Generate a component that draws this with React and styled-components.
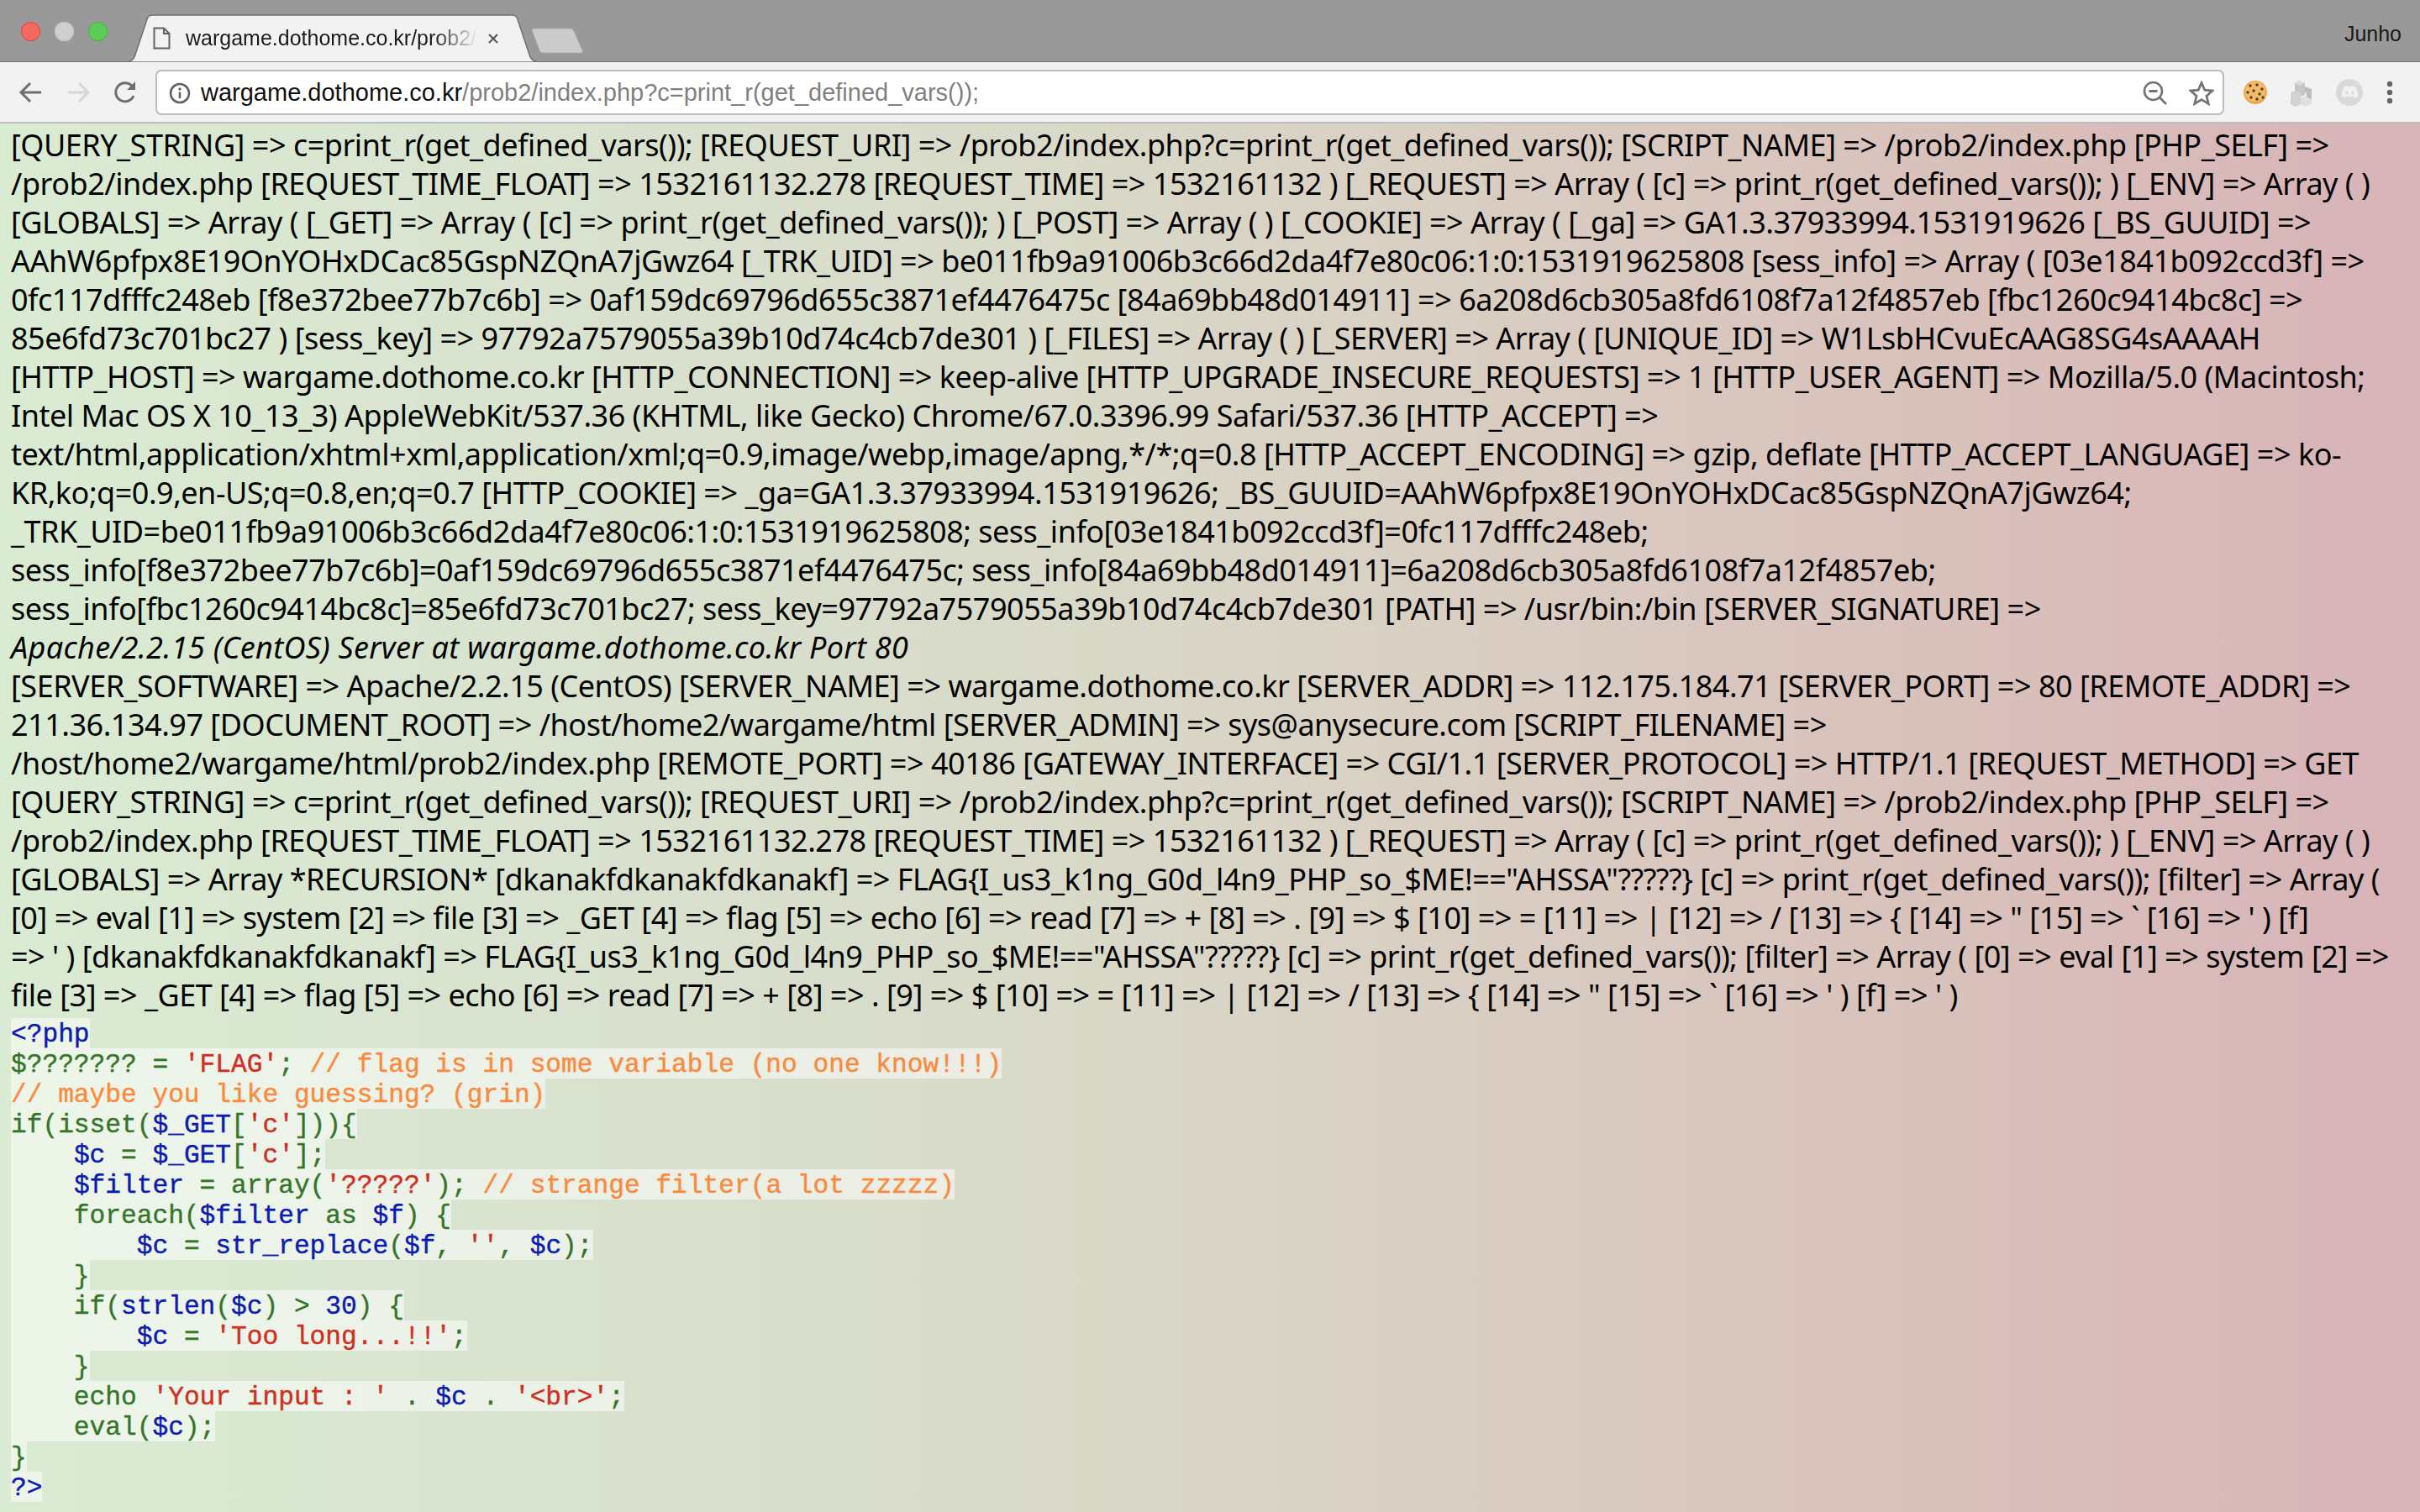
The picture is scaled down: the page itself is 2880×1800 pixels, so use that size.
import React from "react";
import styled, { createGlobalStyle } from "styled-components";
import { FaDiscord } from "react-icons/fa";

const GlobalStyle = createGlobalStyle`
  html, body {
    margin: 0;
    padding: 0;
  }
  body {
    width: 2880px;
    height: 1800px;
    overflow: hidden;
    background: #dcdcc8;
  }
`;

const Window = styled.div`
  width: 2880px;
  height: 1800px;
  display: flex;
  flex-direction: column;
`;

const TitleBar = styled.header`
  height: 73px;
  flex: none;
  display: flex;
  align-items: flex-end;
  background: #999999;
  border-bottom: 1px solid #707070;
  font-family: "Liberation Sans", Arial, sans-serif;
`;

const Lights = styled.div`
  display: flex;
  gap: 17px;
  align-self: flex-start;
  margin: 26px 0 0 25px;
`;

const Light = styled.span`
  width: 23px;
  height: 23px;
  border-radius: 50%;
  background: ${(p) => p.$color};
  box-shadow: inset 0 0 0 1px ${(p) => p.$edge};
`;

const Tab = styled.div`
  position: relative;
  width: 487px;
  height: 57px;
  margin: 0 0 -1px 24px;
  display: flex;
  align-items: center;
  padding-left: 30px;
  box-sizing: border-box;
`;

const TabShape = styled.svg`
  position: absolute;
  inset: 0;
`;

const TabIcon = styled.svg`
  position: relative;
  flex: none;
  width: 21px;
  height: 27px;
`;

const TabTitle = styled.span`
  position: relative;
  width: 347px;
  margin-left: 18px;
  overflow: hidden;
  white-space: nowrap;
  font-size: 25px;
  color: #1b1b1b;
  -webkit-mask-image: linear-gradient(90deg, #000 85%, transparent);
  mask-image: linear-gradient(90deg, #000 85%, transparent);
`;

const TabClose = styled.svg`
  position: relative;
  flex: none;
  width: 14px;
  height: 14px;
  margin-left: 12px;
`;

const NewTab = styled.svg`
  flex: none;
  width: 64px;
  height: 32px;
  align-self: flex-start;
  margin: 32px 0 0 -7px;
`;

const UserName = styled.span`
  margin-left: auto;
  align-self: flex-start;
  margin-top: 25px;
  padding-right: 22px;
  font-size: 25px;
  line-height: 30px;
  color: #1a1a1a;
`;

const Toolbar = styled.div`
  height: 73px;
  flex: none;
  box-sizing: border-box;
  display: flex;
  align-items: center;
  background: #f2f2f2;
  border-bottom: 2px solid #bdbdbd;
  padding-left: 22px;
`;

const NavButton = styled.svg`
  flex: none;
  width: 30px;
  height: 30px;
  margin-right: ${(p) => p.$gap}px;
`;

const Omnibox = styled.div`
  width: 2462px;
  height: 54px;
  flex: none;
  box-sizing: border-box;
  display: flex;
  align-items: center;
  padding: 2px 10px 0 14px;
  background: #ffffff;
  border: 2px solid #bcbcbc;
  border-radius: 7px;
  font-family: "Liberation Sans", Arial, sans-serif;
  font-size: 29px;
  white-space: nowrap;
`;

const InfoIcon = styled.svg`
  flex: none;
  width: 26px;
  height: 26px;
  margin-right: 12px;
`;

const Host = styled.span`
  color: #111111;
`;

const UrlPath = styled.span`
  color: #808080;
`;

const BoxIcons = styled.div`
  margin-left: auto;
  display: flex;
  align-items: center;
  gap: 25px;
`;

const BoxIcon = styled.svg`
  flex: none;
  width: 30px;
  height: 30px;
`;

const Extensions = styled.div`
  flex: 1;
  display: flex;
  align-items: center;
  gap: 24px;
  padding-left: 21px;
`;

const ExtIcon = styled.svg`
  flex: none;
  width: ${(p) => p.$width || 32}px;
  height: 34px;
`;

const DiscordBadge = styled.span`
  width: 32px;
  height: 32px;
  border-radius: 50%;
  display: grid;
  place-items: center;
  background: #d9d9d9;
  color: #f2f2f2;
  font-size: 21px;
`;

const Page = styled.main`
  flex: 1;
  padding: 3px 0 0 13px;
  background: linear-gradient(90deg, #daebd3 0%, #d9e3cf 22%, #d9d9c8 45%, #d9cdc2 62%, #d9beba 85%, #d8b3b8 100%);
`;

const Dump = styled.div`
  font-family: "Noto Sans", "Open Sans", sans-serif;
  font-size: 36px;
  line-height: 46px;
  letter-spacing: -0.49px;
  color: #050505;
`;

const DumpLine = styled.div`
  white-space: pre;
  font-style: ${(p) => (p.$italic ? "italic" : "normal")};
  letter-spacing: ${(p) => (p.$italic ? "0.29px" : "inherit")};
`;

const Code = styled.code`
  display: block;
  margin-top: 4px;
  font-family: "Liberation Mono", "Courier New", monospace;
  font-size: 31.2px;
  line-height: 33px;
  -webkit-text-stroke: 0.4px currentColor;
`;

const CodeLine = styled.div`
  width: fit-content;
  padding-top: 3px;
  white-space: pre;
  background: rgba(255, 255, 255, 0.5);
  color: #35752a;
`;

const tokenColors = {
  k: "#35752a",
  d: "#0c1bb0",
  s: "#cf2f22",
  c: "#f98a3e",
};

const Token = styled.span`
  color: ${(p) => tokenColors[p.$kind]};
`;

const requestLines = [
  "[QUERY_STRING] => c=print_r(get_defined_vars()); [REQUEST_URI] => /prob2/index.php?c=print_r(get_defined_vars()); [SCRIPT_NAME] => /prob2/index.php [PHP_SELF] =>",
  "/prob2/index.php [REQUEST_TIME_FLOAT] => 1532161132.278 [REQUEST_TIME] => 1532161132 ) [_REQUEST] => Array ( [c] => print_r(get_defined_vars()); ) [_ENV] => Array ( )",
];

const dumpLines = [
  ...requestLines,
  "[GLOBALS] => Array ( [_GET] => Array ( [c] => print_r(get_defined_vars()); ) [_POST] => Array ( ) [_COOKIE] => Array ( [_ga] => GA1.3.37933994.1531919626 [_BS_GUUID] =>",
  "AAhW6pfpx8E19OnYOHxDCac85GspNZQnA7jGwz64 [_TRK_UID] => be011fb9a91006b3c66d2da4f7e80c06:1:0:1531919625808 [sess_info] => Array ( [03e1841b092ccd3f] =>",
  "0fc117dfffc248eb [f8e372bee77b7c6b] => 0af159dc69796d655c3871ef4476475c [84a69bb48d014911] => 6a208d6cb305a8fd6108f7a12f4857eb [fbc1260c9414bc8c] =>",
  "85e6fd73c701bc27 ) [sess_key] => 97792a7579055a39b10d74c4cb7de301 ) [_FILES] => Array ( ) [_SERVER] => Array ( [UNIQUE_ID] => W1LsbHCvuEcAAG8SG4sAAAAH",
  "[HTTP_HOST] => wargame.dothome.co.kr [HTTP_CONNECTION] => keep-alive [HTTP_UPGRADE_INSECURE_REQUESTS] => 1 [HTTP_USER_AGENT] => Mozilla/5.0 (Macintosh;",
  "Intel Mac OS X 10_13_3) AppleWebKit/537.36 (KHTML, like Gecko) Chrome/67.0.3396.99 Safari/537.36 [HTTP_ACCEPT] =>",
  "text/html,application/xhtml+xml,application/xml;q=0.9,image/webp,image/apng,*/*;q=0.8 [HTTP_ACCEPT_ENCODING] => gzip, deflate [HTTP_ACCEPT_LANGUAGE] => ko-",
  "KR,ko;q=0.9,en-US;q=0.8,en;q=0.7 [HTTP_COOKIE] => _ga=GA1.3.37933994.1531919626; _BS_GUUID=AAhW6pfpx8E19OnYOHxDCac85GspNZQnA7jGwz64;",
  "_TRK_UID=be011fb9a91006b3c66d2da4f7e80c06:1:0:1531919625808; sess_info[03e1841b092ccd3f]=0fc117dfffc248eb;",
  "sess_info[f8e372bee77b7c6b]=0af159dc69796d655c3871ef4476475c; sess_info[84a69bb48d014911]=6a208d6cb305a8fd6108f7a12f4857eb;",
  "sess_info[fbc1260c9414bc8c]=85e6fd73c701bc27; sess_key=97792a7579055a39b10d74c4cb7de301 [PATH] => /usr/bin:/bin [SERVER_SIGNATURE] =>",
  { italic: true, text: "Apache/2.2.15 (CentOS) Server at wargame.dothome.co.kr Port 80" },
  "[SERVER_SOFTWARE] => Apache/2.2.15 (CentOS) [SERVER_NAME] => wargame.dothome.co.kr [SERVER_ADDR] => 112.175.184.71 [SERVER_PORT] => 80 [REMOTE_ADDR] =>",
  "211.36.134.97 [DOCUMENT_ROOT] => /host/home2/wargame/html [SERVER_ADMIN] => sys@anysecure.com [SCRIPT_FILENAME] =>",
  "/host/home2/wargame/html/prob2/index.php [REMOTE_PORT] => 40186 [GATEWAY_INTERFACE] => CGI/1.1 [SERVER_PROTOCOL] => HTTP/1.1 [REQUEST_METHOD] => GET",
  ...requestLines,
  '[GLOBALS] => Array *RECURSION* [dkanakfdkanakfdkanakf] => FLAG{I_us3_k1ng_G0d_l4n9_PHP_so_$ME!=="AHSSA"?????} [c] => print_r(get_defined_vars()); [filter] => Array (',
  "[0] => eval [1] => system [2] => file [3] => _GET [4] => flag [5] => echo [6] => read [7] => + [8] => . [9] => $ [10] => = [11] => | [12] => / [13] => { [14] => \" [15] => ` [16] => ' ) [f]",
  "=> ' ) [dkanakfdkanakfdkanakf] => FLAG{I_us3_k1ng_G0d_l4n9_PHP_so_$ME!==\"AHSSA\"?????} [c] => print_r(get_defined_vars()); [filter] => Array ( [0] => eval [1] => system [2] =>",
  "file [3] => _GET [4] => flag [5] => echo [6] => read [7] => + [8] => . [9] => $ [10] => = [11] => | [12] => / [13] => { [14] => \" [15] => ` [16] => ' ) [f] => ' )",
];

const codeLines = [
  [["d", "<?php"]],
  [["k", "$??????? = "], ["s", "'FLAG'"], ["k", "; "], ["c", "// flag is in some variable (no one know!!!)"]],
  [["c", "// maybe you like guessing? (grin)"]],
  [["k", "if(isset("], ["d", "$_GET"], ["k", "["], ["s", "'c'"], ["k", "])){"]],
  [["k", "    "], ["d", "$c"], ["k", " = "], ["d", "$_GET"], ["k", "["], ["s", "'c'"], ["k", "];"]],
  [["k", "    "], ["d", "$filter"], ["k", " = array("], ["s", "'?????'"], ["k", "); "], ["c", "// strange filter(a lot zzzzz)"]],
  [["k", "    foreach("], ["d", "$filter"], ["k", " as "], ["d", "$f"], ["k", ") {"]],
  [["k", "        "], ["d", "$c"], ["k", " = "], ["d", "str_replace"], ["k", "("], ["d", "$f"], ["k", ", "], ["s", "''"], ["k", ", "], ["d", "$c"], ["k", ");"]],
  [["k", "    }"]],
  [["k", "    if("], ["d", "strlen"], ["k", "("], ["d", "$c"], ["k", ") > "], ["d", "30"], ["k", ") {"]],
  [["k", "        "], ["d", "$c"], ["k", " = "], ["s", "'Too long...!!'"], ["k", ";"]],
  [["k", "    }"]],
  [["k", "    echo "], ["s", "'Your input : '"], ["k", " . "], ["d", "$c"], ["k", " . "], ["s", "'<br>'"], ["k", ";"]],
  [["k", "    eval("], ["d", "$c"], ["k", ");"]],
  [["k", "}"]],
  [["d", "?>"]],
];

const CookieIcon = () => (
  <ExtIcon viewBox="0 0 32 34">
    <circle cx="16" cy="17" r="14" fill="#eaa94f" />
    <circle cx="16" cy="16" r="12" fill="#f2bc67" />
    {[[10, 9], [18, 8], [24, 13], [7, 17], [14, 15], [21, 19], [11, 23], [18, 25], [25, 23]].map(([x, y]) => (
      <circle key={`${x}-${y}`} cx={x} cy={y} r="1.7" fill="#5b3a22" />
    ))}
  </ExtIcon>
);

const BlocksIcon = () => (
  <ExtIcon viewBox="0 0 32 34">
    <path d="M12 3l7 3v14l-7 3-5-3V6z" fill="#c6c6c6" />
    <path d="M12 3l7 3-7 3-5-3z" fill="#dcdcdc" />
    <path d="M19 10l8 3v14l-6 3v-12l-2-1z" fill="#bdbdbd" />
    <path d="M2 17l6-2 6 2v14l-6 3-6-3z" fill="#d2d2d2" />
    <path d="M14 24l6-2 7 3v5l-7 4-6-3z" fill="#dfdfdf" />
  </ExtIcon>
);

const App = () => {
  return (
    <Window>
      <GlobalStyle />
      <TitleBar>
        <Lights>
          <Light $color="#f4695f" $edge="#d5534a" />
          <Light $color="#cfcfcf" $edge="#c2c2c2" />
          <Light $color="#5fcb57" $edge="#4fb048" />
        </Lights>
        <Tab>
          <TabShape width="487" height="57" viewBox="0 0 487 57">
            <path
              d="M0.5 57 C6 55 8 52 9 48 L23 6 C24 2 26 1 30 1 L457 1 C461 1 463 2 464 6 L478 48 C479 52 481 55 486.5 57 Z"
              fill="#f2f2f2"
              stroke="#707070"
              strokeWidth="1.5"
            />
          </TabShape>
          <TabIcon viewBox="0 0 21 27">
            <path d="M1.5 1.5H13L19.5 8V25.5H1.5Z M13 1.5V8H19.5" fill="none" stroke="#5f6368" strokeWidth="2" />
          </TabIcon>
          <TabTitle>wargame.dothome.co.kr/prob2/index.php</TabTitle>
          <TabClose viewBox="0 0 14 14">
            <path d="M2 2L12 12M12 2L2 12" stroke="#555555" strokeWidth="2" />
          </TabClose>
        </Tab>
        <NewTab viewBox="0 0 64 32">
          <path d="M3 2H47C49 2 50 3 51 5L61 28C62 30 61 31 59 31H14C12 31 11 30 10 28L1 4C1 3 2 2 3 2Z" fill="#cbcbcb" stroke="#a8a8a8" />
        </NewTab>
        <UserName>Junho</UserName>
      </TitleBar>
      <Toolbar>
        <NavButton $gap={26} viewBox="0 0 30 30">
          <path d="M27 15H5M14 4L3 15L14 26" fill="none" stroke="#6e6e6e" strokeWidth="3" />
        </NavButton>
        <NavButton $gap={26} viewBox="0 0 30 30">
          <path d="M3 15H25M16 4L27 15L16 26" fill="none" stroke="#d6d6d6" strokeWidth="3" />
        </NavButton>
        <NavButton $gap={21} viewBox="0 0 30 30">
          <path d="M25 19A11 11 0 1 1 23 7.500" fill="none" stroke="#6e6e6e" strokeWidth="3" />
          <path d="M27 2V12H17Z" fill="#6e6e6e" />
        </NavButton>
        <Omnibox>
          <InfoIcon viewBox="0 0 26 26">
            <circle cx="13" cy="13" r="11" fill="none" stroke="#5f6368" strokeWidth="2.600" />
            <path d="M13 11.500V19" stroke="#5f6368" strokeWidth="2.600" />
            <circle cx="13" cy="8" r="1.700" fill="#5f6368" />
          </InfoIcon>
          <Host>wargame.dothome.co.kr</Host>
          <UrlPath>/prob2/index.php?c=print_r(get_defined_vars());</UrlPath>
          <BoxIcons>
            <BoxIcon viewBox="0 0 30 30">
              <circle cx="12.500" cy="12.500" r="10.500" fill="none" stroke="#717579" strokeWidth="2.600" />
              <path d="M7.500 12.500H17.500M20 20L28 28" stroke="#717579" strokeWidth="2.800" />
            </BoxIcon>
            <BoxIcon viewBox="0 0 30 30">
              <path d="M15 2.500L18.800 11.200L28 12L21 18.200L23.200 27.500L15 22.600L6.800 27.500L9 18.200L2 12L11.200 11.200Z" fill="none" stroke="#717579" strokeWidth="2.800" />
            </BoxIcon>
          </BoxIcons>
        </Omnibox>
        <Extensions>
          <CookieIcon />
          <BlocksIcon />
          <DiscordBadge>
            <FaDiscord />
          </DiscordBadge>
          <ExtIcon $width={16} viewBox="8 0 16 34">
            <circle cx="16" cy="7" r="3.200" fill="#666666" />
            <circle cx="16" cy="17" r="3.200" fill="#666666" />
            <circle cx="16" cy="27" r="3.200" fill="#666666" />
          </ExtIcon>
        </Extensions>
      </Toolbar>
      <Page>
        <Dump>
          {dumpLines.map((line, i) =>
            typeof line === "string" ? (
              <DumpLine key={i}>{line}</DumpLine>
            ) : (
              <DumpLine key={i} $italic={line.italic}>
                {line.text}
              </DumpLine>
            )
          )}
        </Dump>
        <Code>
          {codeLines.map((tokens, i) => (
            <CodeLine key={i}>
              {tokens.map(([kind, text], j) => (
                <Token key={j} $kind={kind}>
                  {text}
                </Token>
              ))}
            </CodeLine>
          ))}
        </Code>
      </Page>
    </Window>
  );
};

export default App;
